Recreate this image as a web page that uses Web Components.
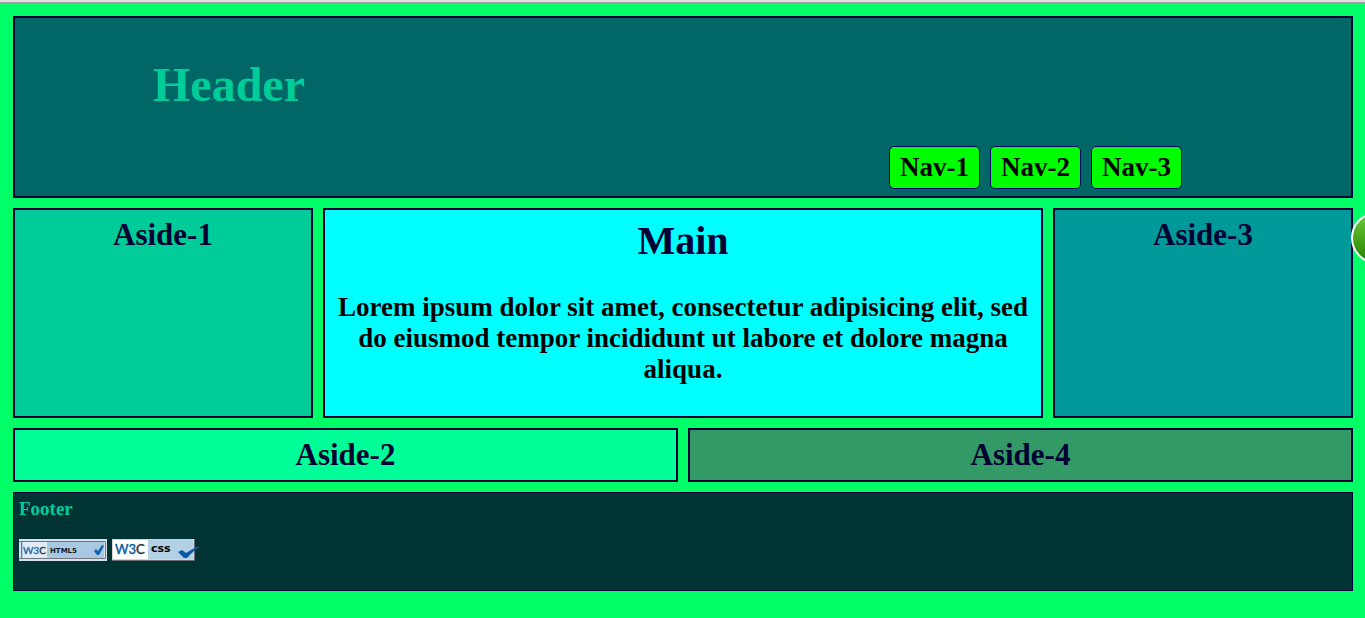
<!DOCTYPE html>
<html lang="en">
<head>
<meta charset="utf-8">
<title>Layout</title>
<style>
body { margin: 0; background: #00ff66; font-family: "Liberation Serif", "Times New Roman", serif; font-weight: bold; color: #000033; overflow-x: hidden; }
</style>
</head>
<body>
<layout-page></layout-page>
<script>
const define = (name, html) => {
  const template = document.createElement('template');
  template.innerHTML = html;
  customElements.define(name, class extends HTMLElement {
    constructor() {
      super();
      this.attachShadow({ mode: 'open' }).append(template.content.cloneNode(true));
    }
  });
};

define('nav-item', `
<style>
:host { display: block; }
a { display: block; padding: 5px 10px; border: 1px solid #000066; border-radius: 5px; background: #00ff00; color: #000000; font-size: 27px; line-height: 31px; text-decoration: none; }
</style>
<a href="#"><slot></slot></a>`);

define('page-header', `
<style>
:host { display: block; }
header { box-sizing: border-box; min-height: 182px; border: 2px solid #000033; background: #006666; padding: 39px 169px 7px 138px; display: flex; flex-direction: column; justify-content: space-between; }
h1 { margin: 0; font-size: 48px; line-height: 56px; color: #00cc99; }
nav { display: flex; justify-content: flex-end; gap: 10px; }
</style>
<header><h1><slot></slot></h1><nav><slot name="nav"></slot></nav></header>`);

define('side-panel', `
<style>
:host { display: block; box-sizing: border-box; border: 2px solid #000033; padding: 5px; text-align: center; }
h2 { margin: 0; font-size: 31px; line-height: 40px; }
</style>
<aside><h2><slot></slot></h2></aside>`);

define('main-panel', `
<style>
:host { display: block; box-sizing: border-box; border: 2px solid #000033; padding: 5px; background: #00ffff; text-align: center; }
h2 { margin: 0; font-size: 40px; line-height: 51px; }
p { margin: 26px 0; font-size: 27px; line-height: 31px; color: #000000; }
</style>
<main><h2><slot name="title"></slot></h2><p><slot></slot></p></main>`);

define('html-badge', `
<style>
:host, a, svg { display: block; }
.logo { font-family: Lato, sans-serif; font-weight: normal; }
.label { font-family: "DejaVu Sans", sans-serif; font-weight: bold; }
</style>
<a href="#" aria-label="Valid HTML5"><svg width="88" height="22" viewBox="0 0 88 22">
<path fill="#d8e2ec" d="M0 0h88v22H0z"/>
<path fill="#a8c8e2" d="M3 3h82v16H3z"/>
<path fill="#e0ebf5" d="M4 3h24v16H4z"/>
<path fill="none" stroke="#737780" d="M0 2.500h86.500v17H0M2.500 2.500v17"/>
<text class="logo" x="4" y="15" font-size="10" fill="#1664a8" stroke="#1664a8" stroke-width=".3">W3<tspan fill="#26303c" stroke="#26303c">C</tspan></text>
<text class="label" x="31" y="14" font-size="7" fill="#111722">HTML5</text>
<path fill="#1261ae" d="M75 12l2-2 2 2 4-6 2 1-5 9h-2z"/>
</svg></a>`);

define('css-badge', `
<style>
:host, a, svg { display: block; }
.logo { font-family: Lato, sans-serif; font-weight: normal; }
.label { font-family: "DejaVu Sans", sans-serif; font-weight: bold; }
</style>
<a href="#" aria-label="Valid CSS"><svg width="88" height="22" viewBox="0 0 88 22">
<path fill="#666c70" d="M0 0h83v22H0z"/>
<path fill="#d5d5d5" d="M0 0h82v21H0z"/>
<path fill="#b4d0e4" d="M36 1h45v19H36z"/>
<path fill="#ffffff" d="M1 1h35v19H1z"/>
<text class="logo" x="3" y="15" font-size="13" fill="#075aa3" stroke="#075aa3" stroke-width=".4">W3<tspan fill="#222c36" stroke="#222c36">C</tspan></text>
<text class="label" x="39" y="13" font-size="11" fill="#000000">css</text>
<path fill="#075aa3" d="M66 13l4-2 4 3 10-6h4c-6 3-9 7-13 11h-3z"/>
</svg></a>`);

define('page-footer', `
<style>
:host { display: block; }
footer { box-sizing: border-box; min-height: 99px; border: 1px solid #000033; background: #003333; padding: 5px; }
h3 { margin: 0; font-size: 19px; line-height: 22px; color: #00cc99; }
.badges { display: flex; gap: 5px; margin-top: 19px; }
</style>
<footer><h3><slot></slot></h3><div class="badges"><slot name="badge"></slot></div></footer>`);

define('side-bubble', `
<style>
:host { position: fixed; top: 212px; right: -38px; width: 52px; height: 52px; box-sizing: border-box; border: 2px solid #ffffff; border-radius: 50%; background: linear-gradient(#6bcc36, #278005); }
</style>`);

define('layout-page', `
<style>
:host { display: block; }
.edge { height: 2px; background: #e0e0e0; border-bottom: 1px solid #a0a0a0; }
.page { display: grid; gap: 10px; padding: 13px 12px 27px 13px; }
.middle { display: grid; grid-template-columns: 5fr 12fr 5fr; gap: 10px; min-height: 210px; }
.lower { display: grid; grid-template-columns: 1fr 1fr; gap: 10px; }
.one { background: #00cc99; }
.two { background: #00ff99; }
.three { background: #009999; }
.four { background: #339966; }
</style>
<div class="edge"></div>
<div class="page">
  <page-header>Header
    <nav-item slot="nav">Nav-1</nav-item>
    <nav-item slot="nav">Nav-2</nav-item>
    <nav-item slot="nav">Nav-3</nav-item>
  </page-header>
  <div class="middle">
    <side-panel class="one">Aside-1</side-panel>
    <main-panel><span slot="title">Main</span>Lorem ipsum dolor sit amet, consectetur adipisicing elit, sed do eiusmod tempor incididunt ut labore et dolore magna aliqua.</main-panel>
    <side-panel class="three">Aside-3</side-panel>
  </div>
  <div class="lower">
    <side-panel class="two">Aside-2</side-panel>
    <side-panel class="four">Aside-4</side-panel>
  </div>
  <page-footer>Footer
    <html-badge slot="badge"></html-badge>
    <css-badge slot="badge"></css-badge>
  </page-footer>
</div>
<side-bubble></side-bubble>`);
</script>
</body>
</html>
